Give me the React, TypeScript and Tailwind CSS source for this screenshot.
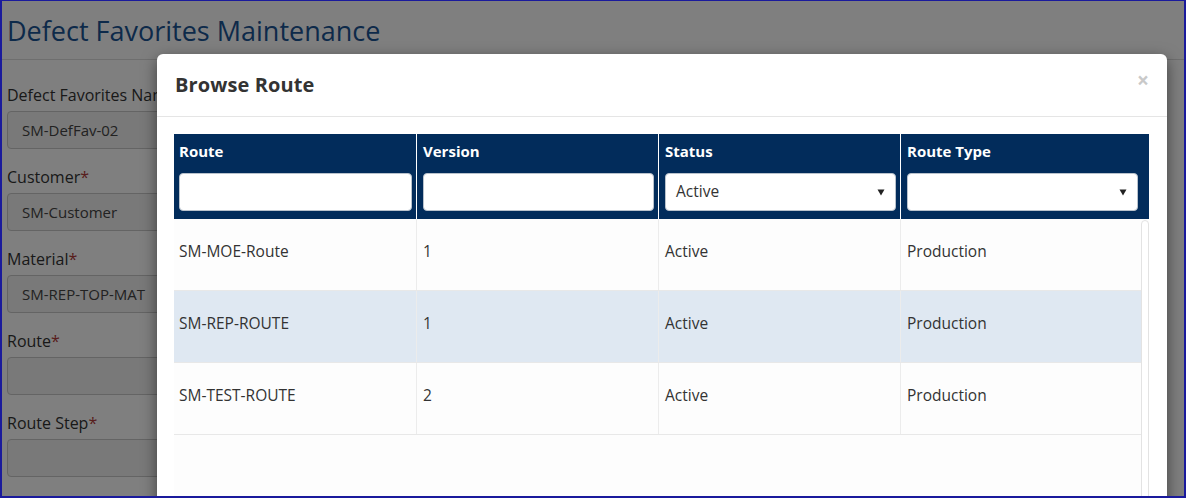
import React from 'react';

const fields = [
  { label: 'Defect Favorites Name', value: 'SM-DefFav-02', required: false },
  { label: 'Customer', value: 'SM-Customer', required: true },
  { label: 'Material', value: 'SM-REP-TOP-MAT', required: true },
  { label: 'Route', value: '', required: true },
  { label: 'Route Step', value: '', required: true },
];

const routes = [
  { route: 'SM-MOE-Route', version: '1', status: 'Active', type: 'Production' },
  { route: 'SM-REP-ROUTE', version: '1', status: 'Active', type: 'Production' },
  { route: 'SM-TEST-ROUTE', version: '2', status: 'Active', type: 'Production' },
];

const Caret = () => (
  <svg width="8" height="8" viewBox="0 0 8 8" className="shrink-0">
    <path d="M0.5 1.5 L7.5 1.5 L4 7.5 Z" fill="#222" />
  </svg>
);

const FilterInput = () => (
  <div className="h-[38px] rounded-[4px] border border-[#b9c2cc] bg-white" />
);

const FilterSelect = ({ value }: { value: string }) => (
  <div className="h-[38px] rounded-[4px] border border-[#b9c2cc] bg-white flex items-center justify-between pl-[10px] pr-[10px] text-[15.5px] text-[#333]">
    <span>{value}</span>
    <Caret />
  </div>
);

export default function App() {
  return (
    <div
      className="relative w-[1186px] h-[498px] overflow-hidden bg-white border-t border-l-2 border-r-2 border-b-2 border-[#1a1a9c]"
      style={{ fontFamily: '"Open Sans", "Liberation Sans", sans-serif' }}
    >
      {/* page behind the dialog */}
      <div className="h-[59px] border-b border-[#dcdcdc] flex items-center pl-[5px]">
        <h1 className="text-[27px] font-normal text-[#1b5494] leading-none">Defect Favorites Maintenance</h1>
      </div>
      <div className="pl-[5px] pt-[25px] flex flex-col gap-[18px]">
        {fields.map((f) => (
          <div key={f.label} className="flex flex-col gap-[5px]">
            <label className="text-[16px] leading-[21px] font-medium text-[#333]">
              {f.label}
              {f.required && <span className="text-[#b03a38]">*</span>}
            </label>
            <div className="w-[600px] h-[38px] rounded-[4px] border border-[#c8c8c8] bg-[#f2f2f2] flex items-center pl-[14px] text-[15px] text-[#444]">
              {f.value}
            </div>
          </div>
        ))}
      </div>

      {/* backdrop */}
      <div className="absolute inset-0 bg-black/50" />

      {/* dialog */}
      <div className="absolute left-[155px] top-[53px] w-[1010px] h-[460px] bg-white rounded-[6px] shadow-[0_5px_15px_rgba(0,0,0,0.5)]">
        <div className="h-[63px] border-b border-[#e5e5e5] flex items-center justify-between pl-[18px] pr-[18px]">
          <h2 className="text-[20px] font-bold text-[#333] tracking-[0.1px]">Browse Route</h2>
          <span className="text-[21px] font-bold leading-none text-[#c9c9c9] -mt-[10px]">×</span>
        </div>
        <div className="pt-[17px] px-[17px]">
          <div className="w-[975px]">
            <div className="grid grid-cols-[243px_242px_242px_1fr] bg-[#022c5b] text-white">
              {['Route', 'Version', 'Status', 'Route Type'].map((h, i) => (
                <div
                  key={h}
                  className={`pt-[6px] pb-[8px] pr-[4px] ${i === 0 ? 'pl-[5px]' : 'pl-[6px]'} ${i < 3 ? 'border-r border-white' : 'pr-[11px]'}`}
                >
                  <div className="text-[15px] font-bold leading-[22px]">{h}</div>
                  <div className="mt-[11px]">
                    {i === 2 ? <FilterSelect value="Active" /> : i === 3 ? <FilterSelect value="" /> : <FilterInput />}
                  </div>
                </div>
              ))}
            </div>
            <div className="flex h-[300px] bg-[#fdfdfd]">
              <div className="w-[967px]">
                {routes.map((r, idx) => (
                  <div
                    key={r.route}
                    className={`grid grid-cols-[243px_242px_242px_1fr] h-[72px] border-b border-[#e8e8e8] text-[15.5px] text-[#333] ${idx === 1 ? 'bg-[#dfe8f2]' : ''}`}
                  >
                    {[r.route, r.version, r.status, r.type].map((c, i) => (
                      <div
                        key={i}
                        className={`pt-[21px] leading-[22px] ${i === 0 ? 'pl-[5px]' : 'pl-[6px]'} ${i < 3 ? 'border-r border-[#ececec]' : ''}`}
                      >
                        {c}
                      </div>
                    ))}
                  </div>
                ))}
              </div>
              <div className="w-[8px] mt-[1px] border border-[#e3e3e3] rounded-t-[4px] bg-white" />
            </div>
          </div>
        </div>
      </div>
    </div>
  );
}
